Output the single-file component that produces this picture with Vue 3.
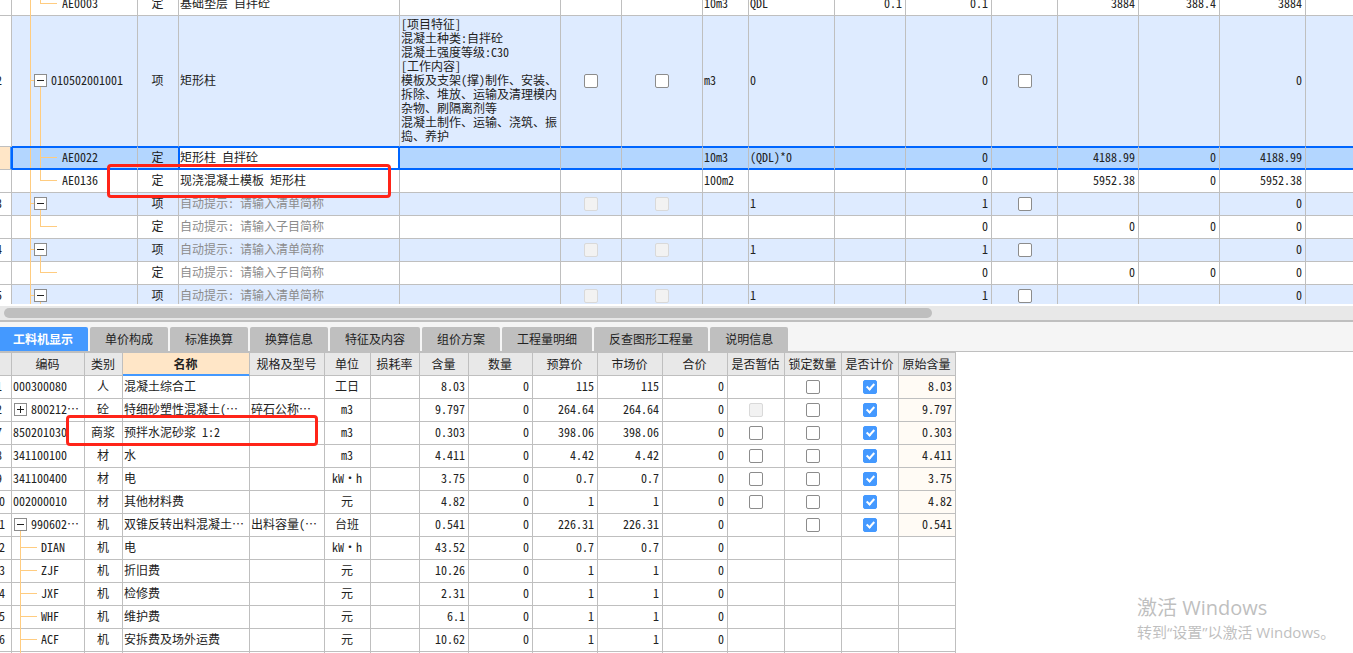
<script setup>
import { reactive } from 'vue'

const feature = [
  '[项目特征]', '混凝土种类:自拌砼', '混凝土强度等级:C30', '[工作内容]',
  '模板及支架(撑)制作、安装、', '拆除、堆放、运输及清理模内', '杂物、刷隔离剂等',
  '混凝土制作、运输、浇筑、振', '捣、养护',
].join('\n')

const hintItem = '自动提示: 请输入清单简称'
const hintSub = '自动提示: 请输入子目简称'

const items = reactive([
  { no: '', code: 'AE0003', leaf: 'last', kind: '定', name: '基础垫层 自拌砼', unit: '10m3', expr: 'QDL', coef: '0.1', qty: '0.1', price: '3884', part: '388.4', total: '3884' },
  { no: '2', code: '010502001001', item: true, kind: '项', name: '矩形柱', feature, unit: 'm3', expr: '0', qty: '0', total: '0', checks: 'on' },
  { no: '', code: 'AE0022', leaf: 'mid', selected: true, kind: '定', name: '矩形柱 自拌砼', unit: '10m3', expr: '(QDL)*0', qty: '0', price: '4188.99', part: '0', total: '4188.99' },
  { no: '', code: 'AE0136', leaf: 'last', kind: '定', name: '现浇混凝土模板 矩形柱', unit: '100m2', qty: '0', price: '5952.38', part: '0', total: '5952.38' },
  { no: '3', item: true, kind: '项', hint: hintItem, expr: '1', qty: '1', total: '0', checks: 'off' },
  { no: '', leaf: 'last', kind: '定', hint: hintSub, qty: '0', price: '0', part: '0', total: '0' },
  { no: '4', item: true, kind: '项', hint: hintItem, expr: '1', qty: '1', total: '0', checks: 'off' },
  { no: '', leaf: 'last', kind: '定', hint: hintSub, qty: '0', price: '0', part: '0', total: '0' },
  { no: '5', item: true, kind: '项', hint: hintItem, expr: '1', qty: '1', total: '0', checks: 'off' },
])
const itemCols = [24, 126, 41, 221, 161, 61, 81, 46, 86, 71, 86, 66, 81, 81, 86, 0]

const tabs = ['工料机显示', '单价构成', '标准换算', '换算信息', '特征及内容', '组价方案', '工程量明细', '反查图形工程量', '说明信息']

const heads = ['', '编码', '类别', '名称', '规格及型号', '单位', '损耗率', '含量', '数量', '预算价', '市场价', '合价', '是否暂估', '锁定数量', '是否计价', '原始含量']
const partCols = [24, 73, 38, 127, 75, 46, 49, 49, 64, 65, 65, 65, 57, 57, 57, 57]
const parts = reactive([
  { no: '1', code: '000300080', kind: '人', name: '混凝土综合工', unit: '工日', amount: '8.03', price: '115', est: '', main: true },
  { no: '2', code: '800212…', box: '+', kind: '砼', name: '特细砂塑性混凝土(…', spec: '碎石公称…', unit: 'm3', amount: '9.797', price: '264.64', est: 'off', main: true },
  { no: '7', code: '850201030', kind: '商浆', name: '预拌水泥砂浆 1:2', unit: 'm3', amount: '0.303', price: '398.06', est: 'on', main: true },
  { no: '8', code: '341100100', kind: '材', name: '水', unit: 'm3', amount: '4.411', price: '4.42', est: 'on', main: true },
  { no: '9', code: '341100400', kind: '材', name: '电', unit: 'kW・h', amount: '3.75', price: '0.7', est: 'on', main: true },
  { no: '10', code: '002000010', kind: '材', name: '其他材料费', unit: '元', amount: '4.82', price: '1', est: 'on', main: true },
  { no: '11', code: '990602…', box: '-', kind: '机', name: '双锥反转出料混凝土…', spec: '出料容量(…', unit: '台班', amount: '0.541', price: '226.31', est: '', main: true },
  { no: '12', code: 'DIAN', child: true, kind: '机', name: '电', unit: 'kW・h', amount: '43.52', price: '0.7' },
  { no: '13', code: 'ZJF', child: true, kind: '机', name: '折旧费', unit: '元', amount: '10.26', price: '1' },
  { no: '14', code: 'JXF', child: true, kind: '机', name: '检修费', unit: '元', amount: '2.31', price: '1' },
  { no: '15', code: 'WHF', child: true, kind: '机', name: '维护费', unit: '元', amount: '6.1', price: '1' },
  { no: '16', code: 'ACF', child: true, kind: '机', name: '安拆费及场外运费', unit: '元', amount: '10.62', price: '1' },
  { no: '', code: '', child: true, kind: '', name: '', unit: '', amount: '', price: '', blank: true },
])
</script>

<template>
  <main class="app">
    <section class="pane">
      <div class="items-scroll">
        <table class="grid items">
          <colgroup>
            <col v-for="(w, i) in itemCols" :key="i" :style="w ? { width: w + 'px' } : {}">
          </colgroup>
          <tbody>
            <tr v-for="(r, i) in items" :key="i" :class="{ item: r.item, selected: r.selected, tall: r.feature }">
              <td class="c no">{{ r.no }}</td>
              <td class="tree">
                <span class="trunk"></span>
                <template v-if="r.item">
                  <span class="stub"></span>
                  <span class="drop"></span>
                  <button class="box" type="button" aria-label="折叠"></button>
                </template>
                <template v-else>
                  <span class="branch" :class="r.leaf"></span>
                  <span class="arm"></span>
                </template>
                <span class="code" :class="{ deep: r.leaf }">{{ r.code }}</span>
              </td>
              <td class="c kind">{{ r.kind }}</td>
              <td class="name"><span v-if="r.hint" class="hint">{{ r.hint }}</span><template v-else>{{ r.name }}</template></td>
              <td class="feature">{{ r.feature }}</td>
              <td class="check"><input v-if="r.checks" type="checkbox" aria-label="主要清单" :disabled="r.checks === 'off'"></td>
              <td class="check"><input v-if="r.checks" type="checkbox" aria-label="锁定清单" :disabled="r.checks === 'off'"></td>
              <td>{{ r.unit }}</td>
              <td>{{ r.expr }}</td>
              <td class="r">{{ r.coef }}</td>
              <td class="r">{{ r.qty }}</td>
              <td class="check"><input v-if="r.checks" type="checkbox" aria-label="锁定单价"></td>
              <td class="r">{{ r.price }}</td>
              <td class="r">{{ r.part }}</td>
              <td class="r">{{ r.total }}</td>
              <td class="rest"></td>
            </tr>
          </tbody>
        </table>
        <div class="mark mark-item"></div>
      </div>
    </section>

    <div class="hbar"><div class="thumb"></div></div>

    <section class="pane detail">
      <nav class="tabs">
        <button v-for="(t, i) in tabs" :key="t" type="button" :class="{ active: i === 0 }">{{ t }}</button>
      </nav>
      <div class="parts-wrap">
        <table class="grid parts">
          <colgroup>
            <col v-for="(w, i) in partCols" :key="i" :style="{ width: w + 'px' }">
          </colgroup>
          <thead>
            <tr><th v-for="(h, i) in heads" :key="i" :class="{ current: i === 3 }">{{ h }}</th></tr>
          </thead>
          <tbody>
            <tr v-for="(p, i) in parts" :key="i">
              <td class="c no">{{ p.no }}</td>
              <td class="tree">
                <span v-if="p.box === '-'" class="drop"></span>
                <button v-if="p.box" class="box" :class="{ plus: p.box === '+' }" type="button" :aria-label="p.box === '+' ? '展开' : '折叠'"></button>
                <template v-if="p.child">
                  <span class="branch mid"></span>
                  <span v-if="!p.blank" class="arm"></span>
                </template>
                <span class="code" :class="{ boxed: p.box, deep: p.child }">{{ p.code }}</span>
              </td>
              <td class="c">{{ p.kind }}</td>
              <td>{{ p.name }}</td>
              <td>{{ p.spec }}</td>
              <td class="c">{{ p.unit }}</td>
              <td></td>
              <td class="r">{{ p.amount }}</td>
              <td class="r">{{ p.blank ? '' : '0' }}</td>
              <td class="r">{{ p.price }}</td>
              <td class="r">{{ p.price }}</td>
              <td class="r">{{ p.blank ? '' : '0' }}</td>
              <td class="check"><input v-if="p.est" type="checkbox" aria-label="是否暂估" :disabled="p.est === 'off'"></td>
              <td class="check"><input v-if="p.main" type="checkbox" aria-label="锁定数量"></td>
              <td class="check"><input v-if="p.main" type="checkbox" aria-label="是否计价" checked></td>
              <td class="r" :class="{ origin: p.main }">{{ p.main ? p.amount : '' }}</td>
            </tr>
          </tbody>
        </table>
        <div class="mark mark-part"></div>
      </div>
    </section>

    <aside class="activate">
      <p class="big">激活 Windows</p>
      <p class="small">转到“设置”以激活 Windows。</p>
    </aside>
  </main>
</template>

<style>
body {
  margin: 0;
  overflow: hidden;
}
</style>

<style scoped>
.app {
  position: relative;
  display: grid;
  grid-template-rows: minmax(0, 304fr) auto minmax(0, 331fr);
  grid-template-columns: minmax(0, 1fr);
  height: 100vh;
  background: #fff;
  color: #222;
  font-family: "Noto Sans CJK SC", sans-serif;
  font-size: 12px;
  line-height: 14px;
}
.pane {
  overflow: hidden;
}
.items-scroll {
  position: relative;
  margin-top: -7px;
}
.grid {
  table-layout: fixed;
  border-collapse: separate;
  border-spacing: 0;
  margin-left: -12px;
  font-feature-settings: "hwid";
}
.items {
  width: calc(100% + 12px);
}
.parts {
  width: 968px;
  border-top: 1px solid #bfbfbf;
}
.grid tr {
  height: 23px;
}
.grid tr.tall {
  height: 131px;
}
.grid td,
.grid th {
  box-sizing: border-box;
  padding: 0 3px 2px 1px;
  border-right: 1px solid #bfbfbf;
  border-bottom: 1px solid #bfbfbf;
  white-space: pre;
  overflow: hidden;
  vertical-align: middle;
  text-align: left;
}
.grid td.c {
  padding: 0 1px 2px 0;
  text-align: center;
}
.grid td.check {
  padding: 0;
}
.grid td.rest {
  border-right: 0;
}
.grid td.r {
  text-align: right;
}
.grid .item td:not(.no) {
  background: #deebff;
}
.hint {
  color: #8c8c8c;
}

.grid .selected td {
  background: #b3d6ff;
  border-bottom-color: #0066ff;
  box-shadow: inset 0 1px #0066ff, inset 0 -1px #0066ff;
}
.grid .tall td:not(.no) {
  border-bottom-color: #0066ff;
}
.grid .selected .no {
  background: #ffe6c7;
  border-right-color: #0066ff;
  border-bottom-color: #bfbfbf;
  box-shadow: inset -1px 0 #4499ff;
}
.grid .selected .tree {
  box-shadow: inset 1px 1px #0066ff, inset 0 -1px #0066ff;
}
.grid .selected .kind {
  border-right-color: #0066ff;
}
.grid .selected .name {
  background: #fff;
  border-right-color: #0066ff;
  box-shadow: inset 1px 1px #0066ff, inset -1px -1px #0066ff;
}

.grid td.tree {
  position: relative;
  overflow: visible;
}
.trunk,
.stub,
.drop,
.branch,
.arm {
  position: absolute;
  background: #ffcc80;
}
.trunk {
  left: 18px;
  top: 0;
  bottom: -1px;
  width: 1px;
}
.stub {
  left: 19px;
  top: calc(50% - 1px);
  width: 3px;
  height: 1px;
}
.drop,
.branch {
  left: 28px;
  width: 1px;
}
.drop {
  top: 50%;
  bottom: -1px;
}
.tall .trunk,
.tall .drop {
  bottom: 0;
}
.branch.mid {
  top: 0;
  bottom: -1px;
}
.selected .trunk,
.selected .branch.mid {
  top: 1px;
  bottom: 1px;
}
.branch.last {
  top: 0;
  bottom: 50%;
}
.arm {
  left: 28px;
  top: calc(50% - 1px);
  width: 17px;
  height: 1px;
}
.box {
  position: absolute;
  left: 22px;
  top: calc(50% - 7px);
  box-sizing: border-box;
  width: 13px;
  height: 13px;
  padding: 0;
  border: 1px solid #8c8c8c;
  border-radius: 0;
  background: linear-gradient(#222, #222) center / 7px 1px no-repeat #fff;
}
.box.plus {
  background: linear-gradient(#222, #222) center / 7px 1px no-repeat, linear-gradient(#222, #222) center / 1px 7px no-repeat, #fff;
}
.items .code {
  margin-left: 38px;
}
.items .code.deep {
  margin-left: 49px;
}
.parts .drop,
.parts .branch,
.parts .arm {
  left: 8px;
}
.parts .box {
  left: 2px;
}
.parts .code.boxed {
  margin-left: 18px;
}
.parts .code.deep {
  margin-left: 28px;
}

input[type="checkbox"] {
  appearance: none;
  position: relative;
  display: block;
  box-sizing: border-box;
  width: 14px;
  height: 14px;
  margin: 0 auto;
  border: 1px solid #8c8c8c;
  border-radius: 2px;
  background: #fff;
}
input[type="checkbox"]:disabled {
  border-color: #d9d9d9;
  background: #f2f2f2;
}
input[type="checkbox"]:checked {
  border-color: #4499ff;
  background: #4499ff;
}
input[type="checkbox"]:checked::after {
  content: "";
  position: absolute;
  left: 4px;
  top: 1px;
  width: 3px;
  height: 6px;
  border: solid #fff;
  border-width: 0 2px 2px 0;
  transform: rotate(42deg);
}

.hbar {
  box-sizing: border-box;
  height: 18px;
  padding: 2px 4px 3px;
  border-top: 2px solid #fff;
  border-bottom: 2px solid #bfbfbf;
  background: #e8e8e8;
}
.thumb {
  width: 69%;
  height: 10px;
  border-radius: 5px;
  background: #bfbfbf;
}

.detail {
  position: relative;
}
.tabs {
  display: flex;
  gap: 2px;
  padding-top: 5px;
  border-bottom: 1px solid #bfbfbf;
  background: #f5f5f5;
}
.tabs button {
  height: 24px;
  padding: 0 15px;
  border: 0;
  border-radius: 2px 2px 0 0;
  background: #bfbfbf;
  color: #222;
  font: inherit;
  white-space: nowrap;
}
.tabs .active {
  margin-left: -2px;
  background: #4499ff;
  color: #fff;
  font-weight: 700;
}
.parts-wrap {
  position: relative;
}
.grid th {
  padding: 0 1px 0 0;
  background: #e8e8e8;
  font-weight: 400;
  text-align: center;
}
.grid th.current {
  border-bottom-color: #4499ff;
  background: #ffe6c7;
  box-shadow: inset 0 -1px #4499ff;
  font-weight: 700;
}
.grid td.origin {
  background: #fffbf5;
}

.mark {
  position: absolute;
  box-sizing: border-box;
  border: 3px solid #ff2418;
  border-radius: 4px;
}
.mark-item {
  left: 107px;
  top: 171px;
  width: 284px;
  height: 34px;
}
.mark-part {
  left: 66px;
  top: 63px;
  width: 252px;
  height: 31px;
}

.activate {
  position: absolute;
  right: 16px;
  bottom: 10px;
  width: 200px;
  color: #bfbfbf;
  font-family: "Open Sans", "Noto Sans CJK SC", sans-serif;
  white-space: nowrap;
  pointer-events: none;
}
.activate p {
  margin: 0;
}
.big {
  font-size: 20px;
  line-height: 26px;
}
.small {
  font-size: 15px;
  line-height: 22px;
}
</style>
